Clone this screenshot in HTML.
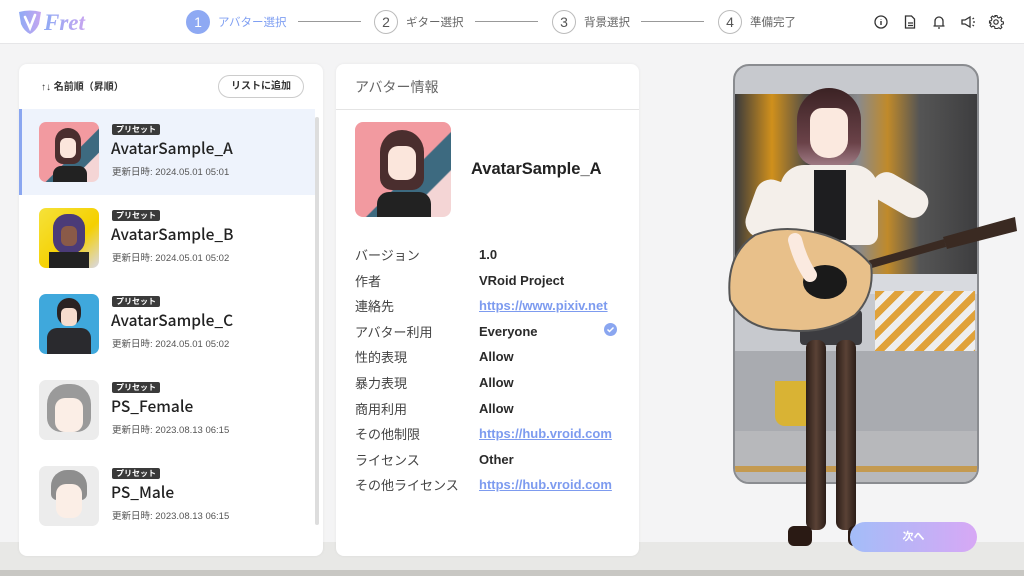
<!DOCTYPE html>
<html><head><meta charset="utf-8"><style>
*{margin:0;padding:0;box-sizing:border-box}
body{width:1024px;height:576px;overflow:hidden;background:#f4f4f5;font-family:"Liberation Sans","Noto Sans CJK JP",sans-serif;color:#333;position:relative}
.hdr{position:absolute;left:0;top:0;width:1024px;height:44px;background:#fff;border-bottom:1px solid #e6e6e8;z-index:5}
.step{position:absolute;top:10px;height:24px;display:flex;align-items:center;font-size:11.5px;color:#666}
.step .c{width:24px;height:24px;border-radius:50%;border:1px solid #bbb;display:flex;align-items:center;justify-content:center;font-size:14px;color:#555;margin-right:8px;background:#fff}
.step.on{color:#7f9ff2}.step.on .c{background:#8ea9f3;border-color:#8ea9f3;color:#fff}
.ln{position:absolute;top:21px;height:1px;background:#999}
.card{position:absolute;background:#fff;border-radius:8px;box-shadow:0 0 3px rgba(0,0,0,.06);z-index:3}
.item{position:absolute;left:0;width:296px;height:86px}
.item.sel{background:#eef3fc;border-left:3px solid #8aa6f0}
.th{position:absolute;left:20px;top:13px;width:60px;height:60px;border-radius:7px;overflow:hidden}
.badge{position:absolute;left:93px;top:15px;background:#3a3a3a;color:#fff;font-size:8px;font-weight:bold;padding:0 4px;height:11px;line-height:11px;border-radius:2px}
.nm{position:absolute;left:92px;top:28px;font-size:15.5px;color:#222;font-family:"Noto Sans CJK JP","Liberation Sans",sans-serif;font-weight:500}
.dt{position:absolute;left:93px;top:55px;font-size:9.5px;color:#555}
.row{position:absolute;left:19px;font-size:13px;color:#444;height:20px}
.row b,.row a{position:absolute;left:124px;top:2px;font-weight:bold;white-space:nowrap}
.row b{color:#2a2a2a}
.row a{color:#7d9bef;text-decoration:underline;width:139px;overflow:hidden}
.ic{position:absolute;top:14px}
</style></head><body>
<div style="position:absolute;left:0;top:542px;width:1024px;height:28px;background:#e8e8e6"></div>
<div style="position:absolute;left:0;top:570px;width:1024px;height:6px;background:#c8c7c3"></div>
<div class="hdr">
 <svg style="position:absolute;left:18px;top:9px" width="92" height="26" viewBox="0 0 92 26">
  <defs><linearGradient id="lg" x1="0" x2="1"><stop offset="0" stop-color="#8eaaf5"/><stop offset="1" stop-color="#c7a6f0"/></linearGradient></defs>
  <path d="M1 3 Q12 0 23 3 L21 15 Q18 22 12 25 Q6 22 3 15 Z" fill="url(#lg)"/>
  <path d="M7 8 L12 19 L17 6" stroke="#fff" stroke-width="2.6" fill="none" stroke-linecap="round"/>
  <text x="26" y="21" font-family="Liberation Serif,serif" font-style="italic" font-weight="bold" font-size="23" fill="url(#lg)">Fret</text>
 </svg>
 <div class="step on" style="left:186px"><span class="c">1</span>アバター選択</div>
 <div class="ln" style="left:298px;width:63px"></div>
 <div class="step" style="left:374px"><span class="c">2</span>ギター選択</div>
 <div class="ln" style="left:475px;width:63px"></div>
 <div class="step" style="left:552px"><span class="c">3</span>背景選択</div>
 <div class="ln" style="left:641px;width:63px"></div>
 <div class="step" style="left:718px"><span class="c">4</span>準備完了</div>
 <svg class="ic" style="left:873px" width="16" height="16" viewBox="0 0 16 16"><circle cx="8" cy="8" r="6" fill="none" stroke="#333" stroke-width="1.3"/><path d="M8 7v4M8 5v.5" stroke="#333" stroke-width="1.4"/></svg>
 <svg class="ic" style="left:902px" width="16" height="16" viewBox="0 0 16 16"><path d="M3.5 2h6l3 3v9h-9z" fill="none" stroke="#333" stroke-width="1.3"/><path d="M6 9h5M6 11.5h5" stroke="#333" stroke-width="1.2"/></svg>
 <svg class="ic" style="left:931px" width="16" height="16" viewBox="0 0 16 16"><path d="M4 12V7a4 4 0 018 0v5M2.5 12h11M7 14h2" fill="none" stroke="#333" stroke-width="1.3"/></svg>
 <svg class="ic" style="left:960px" width="16" height="16" viewBox="0 0 16 16"><path d="M2 6h3l5-3v10l-5-3H2z" fill="none" stroke="#333" stroke-width="1.3"/><path d="M12.5 5l1.5-1M13 8h2M12.5 11l1.5 1" stroke="#333" stroke-width="1.2"/></svg>
 <svg class="ic" style="left:988px" width="16" height="16" viewBox="0 0 16 16"><circle cx="8" cy="8" r="2.2" fill="none" stroke="#333" stroke-width="1.2"/><path d="M7 1.5h2l.4 1.8 1.5.7 1.6-1 1.4 1.4-1 1.6.7 1.5 1.8.4v2l-1.8.4-.7 1.5 1 1.6-1.4 1.4-1.6-1-1.5.7L9 14.5H7l-.4-1.8-1.5-.7-1.6 1-1.4-1.4 1-1.6-.7-1.5L1.5 9V7l1.8-.4.7-1.5-1-1.6 1.4-1.4 1.6 1 1.5-.7z" fill="none" stroke="#333" stroke-width="1.1"/></svg>
</div>

<div class="card" style="left:19px;top:64px;width:304px;height:492px;overflow:hidden">
 <div style="position:absolute;left:22px;top:14px;font-size:10px;font-weight:bold;color:#333">↑↓ 名前順（昇順）</div>
 <div style="position:absolute;left:199px;top:11px;width:86px;height:23px;border:1px solid #ccc;border-radius:12px;font-size:10px;font-weight:bold;text-align:center;line-height:21px;color:#333">リストに追加</div>
 <div class="item sel" style="top:45px">
  <div class="th" style="left:17px;background:linear-gradient(135deg,#f29aa0 0%,#f29aa0 55%,#3d6a80 56%,#3d6a80 75%,#f4d5d5 76%)"><div style="position:absolute;left:16px;top:6px;width:26px;height:36px;border-radius:13px 13px 8px 8px;background:#4a2e2e"></div><div style="position:absolute;left:21px;top:16px;width:16px;height:20px;border-radius:6px;background:#fbe6dc"></div><div style="position:absolute;left:14px;top:44px;width:34px;height:18px;background:#222;border-radius:8px 8px 0 0"></div></div>
  <div class="badge" style="left:90px">プリセット</div><div class="nm" style="left:89px">AvatarSample_A</div><div class="dt" style="left:90px">更新日時: 2024.05.01 05:01</div>
 </div>
 <div class="item" style="top:131px">
  <div class="th" style="background:linear-gradient(135deg,#f5e23a,#f5d000 60%,#d8d8e8)"><div style="position:absolute;left:14px;top:6px;width:32px;height:40px;border-radius:14px;background:#4b3b78"></div><div style="position:absolute;left:22px;top:18px;width:16px;height:20px;border-radius:6px;background:#8a5a48"></div><div style="position:absolute;left:10px;top:44px;width:40px;height:16px;background:#222"></div></div>
  <div class="badge">プリセット</div><div class="nm">AvatarSample_B</div><div class="dt">更新日時: 2024.05.01 05:02</div>
 </div>
 <div class="item" style="top:217px">
  <div class="th" style="background:#3fa8dc"><div style="position:absolute;left:18px;top:4px;width:24px;height:28px;border-radius:12px;background:#2a2222"></div><div style="position:absolute;left:22px;top:14px;width:16px;height:18px;border-radius:5px;background:#f6dccd"></div><div style="position:absolute;left:8px;top:34px;width:44px;height:26px;background:#2a2a2e;border-radius:10px 10px 0 0"></div></div>
  <div class="badge">プリセット</div><div class="nm">AvatarSample_C</div><div class="dt">更新日時: 2024.05.01 05:02</div>
 </div>
 <div class="item" style="top:303px">
  <div class="th" style="background:#ececec"><div style="position:absolute;left:8px;top:4px;width:44px;height:48px;border-radius:20px 20px 14px 14px;background:#9a9a9a"></div><div style="position:absolute;left:16px;top:18px;width:28px;height:34px;border-radius:10px;background:#fbeee6"></div></div>
  <div class="badge">プリセット</div><div class="nm">PS_Female</div><div class="dt">更新日時: 2023.08.13 06:15</div>
 </div>
 <div class="item" style="top:389px">
  <div class="th" style="background:#ececec"><div style="position:absolute;left:12px;top:4px;width:36px;height:30px;border-radius:16px 16px 6px 6px;background:#8e8e8e"></div><div style="position:absolute;left:17px;top:18px;width:26px;height:34px;border-radius:10px;background:#fbeee6"></div></div>
  <div class="badge">プリセット</div><div class="nm">PS_Male</div><div class="dt">更新日時: 2023.08.13 06:15</div>
 </div>
 <div style="position:absolute;left:296px;top:53px;width:4px;height:408px;background:#ddd;border-radius:2px"></div>
</div>

<div class="card" style="left:336px;top:64px;width:303px;height:492px">
 <div style="position:absolute;left:19px;top:13px;font-size:14px;color:#666">アバター情報</div>
 <div style="position:absolute;left:0;top:45px;width:303px;height:1px;background:#e4e4e4"></div>
 <div style="position:absolute;left:19px;top:58px;width:96px;height:95px;border-radius:8px;overflow:hidden;background:linear-gradient(135deg,#f29aa0 0%,#f29aa0 55%,#3d6a80 56%,#3d6a80 75%,#f4d5d5 76%)"><div style="position:absolute;left:25px;top:8px;width:44px;height:60px;border-radius:22px 22px 12px 12px;background:#4a2e2e"></div><div style="position:absolute;left:33px;top:24px;width:28px;height:34px;border-radius:10px;background:#fbe6dc"></div><div style="position:absolute;left:22px;top:70px;width:54px;height:26px;background:#222;border-radius:12px 12px 0 0"></div></div>
 <div style="position:absolute;left:135px;top:96px;font-size:16.5px;font-weight:bold;color:#222">AvatarSample_A</div>
 <div class="row" style="top:181px">バージョン<b>1.0</b></div>
 <div class="row" style="top:207px">作者<b>VRoid Project</b></div>
 <div class="row" style="top:232px">連絡先<a>https://www.pixiv.net</a></div>
 <div class="row" style="top:258px">アバター利用<b>Everyone</b></div>
 <svg style="position:absolute;left:268px;top:259px" width="13" height="13"><circle cx="6.5" cy="6.5" r="6.5" fill="#8aa6f0"/><path d="M3.5 6.5l2 2 4-4" stroke="#fff" stroke-width="1.5" fill="none"/></svg>
 <div class="row" style="top:283px">性的表現<b>Allow</b></div>
 <div class="row" style="top:309px">暴力表現<b>Allow</b></div>
 <div class="row" style="top:335px">商用利用<b>Allow</b></div>
 <div class="row" style="top:360px">その他制限<a>https://hub.vroid.com</a></div>
 <div class="row" style="top:386px">ライセンス<b>Other</b></div>
 <div class="row" style="top:411px">その他ライセンス<a>https://hub.vroid.com</a></div>
</div>

<div style="position:absolute;left:733px;top:64px;width:246px;height:420px;border:2px solid #8a8c90;border-radius:16px;overflow:hidden;background:#c7c9ce">
 <div style="position:absolute;left:0;top:28px;width:246px;height:180px;background:linear-gradient(90deg,#3a3a3c 0%,#d0901c 15%,#4a4a4a 30%,#8a8a8c 50%,#c08a2a 62%,#555 75%,#3c3c3e 100%)"></div>
 <div style="position:absolute;left:0;top:208px;width:246px;height:20px;background:#d8dadf"></div>
 <div style="position:absolute;left:140px;top:225px;width:100px;height:65px;background:repeating-linear-gradient(135deg,#e0a23a 0 7px,#eee 7px 14px)"></div>
 <div style="position:absolute;left:0;top:285px;width:246px;height:80px;background:#a9abb0"></div>
 <div style="position:absolute;left:40px;top:315px;width:40px;height:45px;background:#d9b334;border-radius:0 0 10px 10px"></div>
 <div style="position:absolute;left:0;top:365px;width:246px;height:55px;background:#b7b8bb"></div>
 <div style="position:absolute;left:0;top:400px;width:246px;height:6px;background:#c49a50"></div>
</div>
<div style="position:absolute;left:797px;top:88px;width:64px;height:78px;border-radius:32px 32px 20px 20px;background:linear-gradient(#3b2224,#6a4248 70%,#a07c86)"></div>
<div style="position:absolute;left:810px;top:108px;width:38px;height:50px;border-radius:12px 12px 18px 18px;background:#fbe9df"></div>
<div style="position:absolute;left:780px;top:165px;width:98px;height:80px;border-radius:24px 24px 10px 10px;background:#f4efea"></div>
<div style="position:absolute;left:814px;top:170px;width:32px;height:70px;background:#1e1e20"></div>
<div style="position:absolute;left:750px;top:180px;width:40px;height:60px;border-radius:16px;background:#f4efea;transform:rotate(20deg)"></div>
<div style="position:absolute;left:870px;top:180px;width:60px;height:30px;border-radius:14px;background:#f4efea;transform:rotate(30deg)"></div>
<div style="position:absolute;left:800px;top:310px;width:62px;height:35px;background:#3c3c40;border-radius:4px"></div>
<div style="position:absolute;left:806px;top:340px;width:20px;height:190px;background:linear-gradient(90deg,#2c1e18,#5a4236,#2c1e18);border-radius:8px"></div>
<div style="position:absolute;left:836px;top:340px;width:20px;height:190px;background:linear-gradient(90deg,#2c1e18,#5a4236,#2c1e18);border-radius:8px"></div>
<div style="position:absolute;left:788px;top:526px;width:24px;height:20px;background:#2a1a14;border-radius:6px"></div>
<div style="position:absolute;left:848px;top:526px;width:20px;height:20px;background:#2a1a14;border-radius:6px"></div>
<svg style="position:absolute;left:725px;top:205px" width="295" height="135" viewBox="0 0 295 135">
 <path d="M220 38 L80 78" stroke="#3a2a22" stroke-width="8"/>
 <path d="M218 32 L290 12 L292 26 L222 44 Z" fill="#3a2a22"/>
 <path d="M30 30 Q60 18 100 30 Q130 40 146 60 Q150 90 130 110 Q100 130 60 125 Q20 125 5 95 Q0 50 30 30 Z" fill="#e8c08a" stroke="#555" stroke-width="2"/>
 <ellipse cx="100" cy="77" rx="22" ry="17" fill="#1a1a1a"/>
 <path d="M70 35 Q75 55 85 70" stroke="#fbeae0" stroke-width="14" fill="none" stroke-linecap="round"/>
</svg>
<div style="position:absolute;left:850px;top:522px;width:127px;height:30px;border-radius:15px;background:linear-gradient(90deg,#a3bdf8,#d7a8f5);color:#fff;font-size:11px;font-weight:bold;text-align:center;line-height:30px;z-index:4">次へ</div>
</body></html>
